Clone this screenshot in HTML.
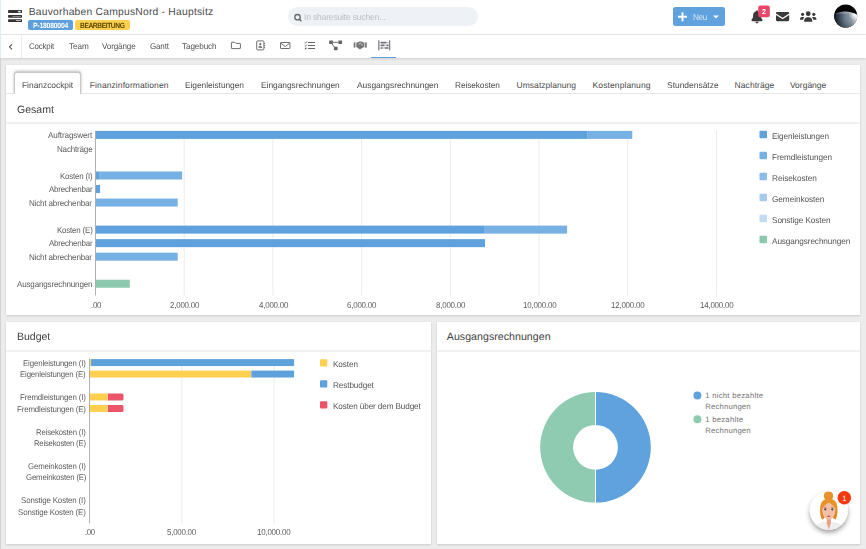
<!DOCTYPE html>
<html lang="de"><head><meta charset="utf-8"><title>Bauvorhaben CampusNord - Hauptsitz</title>
<style>
html,body{margin:0;padding:0}
body{width:866px;height:549px;overflow:hidden;position:relative;background:#ececec;font-family:"Liberation Sans", sans-serif;}
.abs,.t{position:absolute}
.t{white-space:nowrap;line-height:normal;transform-origin:0 0;text-rendering:geometricPrecision}

#hdr{left:0;top:0;width:866px;height:34px;background:#fff;border-bottom:1px solid #e7e7e7}
#nav{left:0;top:35px;width:866px;height:23px;background:#fff;box-shadow:0 1px 2.5px rgba(0,0,0,.12)}
#lstrip{left:0;top:0;width:1px;height:58px;background:#e3ebf5}
#lstrip2{left:0;top:58px;width:1px;height:491px;background:#d2d2d2}
#navdiv{left:21px;top:35px;width:1px;height:23px;background:#ececec}
.badge{border-radius:2px;height:9.5px}
#search{left:288px;top:7px;width:190px;height:19px;border-radius:10px;background:#eef1f5}
#neu{left:672.6px;top:7.1px;width:52.8px;height:18.5px;border-radius:2.5px;background:#5fa2de}
.card{background:#fff;box-shadow:0 1px 2px rgba(0,0,0,.13),0 0 1px rgba(0,0,0,.08)}
#c1{left:6px;top:64.5px;width:853.8px;height:250.8px}
#c2{left:6px;top:322px;width:424.8px;height:221.5px}
#c3{left:436.6px;top:322px;width:423.2px;height:221.5px}
.hl{height:1.5px;background:#f0f0f0}
#tab{left:13.9px;top:71.9px;width:67px;height:22.1px;background:#fff;border:1px solid #c8c8c8;border-bottom:none;border-radius:3px 3px 0 0;box-sizing:border-box;box-shadow:0 -1px 3px rgba(0,0,0,.28);clip-path:inset(-6px -6px 0 -6px)}
#navul{left:371.3px;top:56.5px;width:24.7px;height:1.6px;background:#5c9fdc}
svg.main{position:absolute;left:0;top:0}
</style></head><body>
<div class="abs" id="hdr"></div>
<div class="abs" id="nav"></div>
<div class="abs" id="lstrip"></div><div class="abs" id="lstrip2"></div>
<div class="abs" id="navdiv"></div>
<div class="abs badge" style="left:28.4px;top:20.3px;width:44.5px;background:#5c9fdc"></div>
<div class="abs badge" style="left:75.1px;top:20.3px;width:54.6px;background:#fdd050"></div>
<div class="abs" id="search"></div>
<div class="abs" id="neu"></div>
<div class="abs" id="navul"></div>
<div class="abs card" id="c1"></div>
<div class="abs" style="left:6px;top:93px;width:853.5px;height:1px;background:#e6e6e6"></div>
<div class="abs" id="tab"></div>
<div class="abs hl" style="left:6px;top:122.3px;width:853.5px"></div>
<div class="abs card" id="c2"></div>
<div class="abs hl" style="left:6px;top:350px;width:425px"></div>
<div class="abs card" id="c3"></div>
<div class="abs hl" style="left:436.5px;top:350px;width:423px"></div>
<svg class="main" width="866" height="549" viewBox="0 0 866 549">
<g id="icons">
<!-- server -->
<g fill="#333">
<rect x="8.100" y="10.100" width="13.900" height="2.900" rx=".6"/><rect x="8.100" y="14.900" width="13.900" height="2.800" rx=".6"/><rect x="8.100" y="19.200" width="13.900" height="2.800" rx=".6"/>
</g>
<rect x="17.900" y="10.900" width="2.900" height="1.500" fill="#d8dde6"/>
<rect x="12.400" y="16" width="8.400" height=".8" fill="#9a9a9a"/>
<rect x="15.900" y="20.200" width="4.900" height=".8" fill="#d9cfc0"/>
<!-- search -->
<circle cx="297.500" cy="17.200" r="2.700" fill="none" stroke="#666" stroke-width="1.300"/>
<path d="M299.600 19.300L301 20.700" stroke="#666" stroke-width="1.500" stroke-linecap="round"/>
<!-- plus + caret -->
<path d="M678 16.7h9M682.5 12.2v9" stroke="#fff" stroke-width="1.9"/>
<path d="M713 15.4h5.9l-2.95 3z" fill="#fff"/>
<!-- bell -->
<path d="M757 10.2c.5 0 .8.35.8.8v.35c1.9.4 3.1 2 3.1 4 0 2.3.6 3.4 1.4 4.200c.3.300.300.600.300.800 0 .5-.4.800-.9.800h-9.400c-.5 0-.9-.300-.9-.800 0-.200 0-.500.300-.800.800-.800 1.400-1.900 1.400-4.200 0-2 1.200-3.600 3.100-4v-.350c0-.450.300-.8.800-.8zM755.400 21.800h3.200c0 .900-.700 1.500-1.600 1.500s-1.600-.600-1.600-1.500z" fill="#3a3a3a"/>
<rect x="758.2" y="5.5" width="11.6" height="11.7" rx="2" fill="#e8476a"/>
<!-- envelope solid -->
<path d="M777.200 12h10.800c.700 0 1.200.550 1.200 1.200v.300l-6.600 4.300-6.600-4.300v-.300c0-.650.550-1.200 1.200-1.200zM776 15l6.600 4.200 6.600-4.200v5c0 .650-.550 1.200-1.200 1.200h-10.800c-.650 0-1.200-.550-1.200-1.200z" fill="#3a3a3a"/>
<!-- users -->
<g fill="#3a3a3a">
<circle cx="808.2" cy="13.700" r="2.400"/>
<path d="M804.200 21.800v-1.400c0-1.900 1.500-3.200 3.200-3.200h1.600c1.700 0 3.200 1.300 3.200 3.200v1.400z"/>
<circle cx="802.600" cy="14.300" r="1.600"/><circle cx="813.800" cy="14.300" r="1.600"/>
<path d="M800 19.800v-.900c0-1.200.900-2 2-2h1.300c.400 0 .700.100 1 .300-.700.700-1.100 1.600-1.200 2.600zM816.400 19.800v-.900c0-1.200-.900-2-2-2h-1.300c-.400 0-.700.100-1 .300.700.700 1.100 1.600 1.200 2.600z"/>
</g>
<!-- chevron left -->
<path d="M12 44.300L9.500 46.800L12 49.300" fill="none" stroke="#555" stroke-width="1.100"/>
<!-- nav icons -->
<g fill="none" stroke="#666" stroke-width=".95">
<path d="M231.900 42.300h2.900l1.100 1.100h4q.5 0 .5.5v4.200q0 .5-.5.5h-8q-.5 0-.5-.5v-5.300q0-.5.5-.5z"/>
<rect x="256.700" y="40.900" width="7.200" height="9" rx="1"/>
<path d="M264.600 43v1M264.600 45v1M264.600 47v1" stroke-width=".9"/>
<rect x="280.500" y="42.500" width="9.400" height="6" rx=".5"/>
<path d="M280.700 43.100l4.500 3.400 4.500-3.400"/>
<path d="M308 42.500h7.100M308 45.500h7.100M308 48.500h7.100" stroke-width="1.150"/>
<path d="M304.700 42.400l.8.800 1.400-1.600M304.700 45.400l.8.800 1.400-1.600" stroke-width=".95"/>
</g>
<circle cx="260.300" cy="44.200" r="1.100" fill="#666"/>
<path d="M258.400 47.800c0-1.100.800-1.800 1.900-1.800s1.900.700 1.900 1.800z" fill="#5a5a5a"/>
<circle cx="305.700" cy="48.500" r=".9" fill="#666"/>
<!-- project diagram -->
<g fill="#666">
<rect x="329.200" y="40.600" width="3.700" height="3.500" rx=".3"/><rect x="338.400" y="40.600" width="3.700" height="3.500" rx=".3"/><rect x="333.900" y="46.800" width="3.700" height="3.500" rx=".3"/>
</g>
<path d="M332.900 42.300h5.500M331.800 43.500l2.900 4" stroke="#666" stroke-width=".9" fill="none"/>
<!-- handshake -->
<g fill="#747474">
<rect x="353.700" y="42.400" width="1.700" height="5.200"/><rect x="365.100" y="42.400" width="1.700" height="5.200"/>
<path d="M356.300 42.600h1.300l1.700-1h2.300l1.800 1h1v4.600h-.9l-2.800 1.800c-.5.300-1 .3-1.500 0l-2.300-1.800h-.6z"/>
</g>
<path d="M358.800 44.300l1.500-1.300 2.700 2.600" stroke="#fff" stroke-width=".7" fill="none"/>
<!-- abacus -->
<g fill="none">
<path d="M378.800 40.300v10.100M389.700 40.300v10.100" stroke="#5a5868" stroke-width=".95"/>
<path d="M379 42.600h10.600M379 45.300h10.600M379 48h10.600" stroke="#77758a" stroke-width=".5"/>
<path d="M380.800 42.600h5.600M380.800 45.300h3.600M386.600 45.300h1.800M380.800 48h1.800M384.800 48h3.600" stroke="#75737f" stroke-width="1.700"/>
</g>

<!-- user avatar -->
<defs>
<clipPath id="avc"><circle cx="845.7" cy="16" r="11.5"/></clipPath>
<linearGradient id="moon" gradientUnits="userSpaceOnUse" x1="834" y1="0" x2="857.500" y2="0"><stop offset="0" stop-color="#0b1118"/><stop offset=".18" stop-color="#2c3946"/><stop offset=".45" stop-color="#67788a"/><stop offset=".75" stop-color="#93a1ad"/><stop offset=".92" stop-color="#c9d0d6"/><stop offset="1" stop-color="#ffffff"/></linearGradient>
<linearGradient id="moonv" gradientUnits="userSpaceOnUse" x1="0" y1="11" x2="0" y2="28"><stop offset="0" stop-color="#fff" stop-opacity=".45"/><stop offset=".22" stop-color="#fff" stop-opacity="0"/><stop offset=".6" stop-color="#000" stop-opacity=".05"/><stop offset="1" stop-color="#000" stop-opacity=".3"/></linearGradient>
<radialGradient id="moonh" gradientUnits="userSpaceOnUse" cx="855" cy="14.500" r="6"><stop offset="0" stop-color="#fff" stop-opacity=".95"/><stop offset="1" stop-color="#fff" stop-opacity="0"/></radialGradient>
<filter id="sh" x="-40%" y="-40%" width="180%" height="190%"><feGaussianBlur in="SourceAlpha" stdDeviation="2.6"/><feOffset dy="2.5"/><feComponentTransfer><feFuncA type="linear" slope=".38"/></feComponentTransfer><feMerge><feMergeNode/><feMergeNode in="SourceGraphic"/></feMerge></filter>
<clipPath id="botc"><circle cx="828.8" cy="510.6" r="19"/></clipPath>
</defs>
<g clip-path="url(#avc)">
<rect x="834" y="4" width="24" height="24" fill="#050505"/>
<circle cx="845" cy="35" r="23.500" fill="url(#moon)"/>
<circle cx="845" cy="35" r="23.500" fill="url(#moonv)"/>
<circle cx="845" cy="35" r="23.500" fill="url(#moonh)"/>
</g>
<!-- chatbot -->
<circle cx="828.8" cy="510.6" r="19" fill="#fff" filter="url(#sh)"/>
<g clip-path="url(#botc)">
<path d="M814 531c0-5.500 4.500-8.500 10.300-9.300l4.500 2.300 4.500-2.300c5.800.8 10.300 3.800 10.300 9.300z" fill="#efefef"/>
<path d="M820.600 506c-1 5-.5 10 1.600 13.800l2.600-2zM837 506c1 5 .5 10-1.600 13.800l-2.600-2z" fill="#e08a22"/>
<rect x="826.700" y="516" width="4.200" height="8" fill="#e7a38a"/>
<path d="M826.700 522.500l2.100 7.500 2.100-7.500z" fill="#e7a38a"/>
<circle cx="828.500" cy="495.900" r="4.700" fill="#e8922a"/>
<ellipse cx="828.800" cy="506.200" rx="8.500" ry="7.800" fill="#e8922a"/>
<ellipse cx="828.800" cy="510.700" rx="6.400" ry="8.900" fill="#f3bfa8"/>
<path d="M821.800 510c-.8-5.500 2-9.500 7-9.500s7.800 4 7 9.500c-1.200-3.200-3.600-6-7-7.600-3.400 1.600-5.800 4.400-7 7.600z" fill="#e8922a"/>
<circle cx="825.300" cy="509.300" r="1.150" fill="#3f4550"/><circle cx="832.300" cy="509.300" r="1.150" fill="#3f4550"/>
<path d="M823.800 507.300h2.900M830.900 507.300h2.900" stroke="#b5651d" stroke-width=".5"/>
<ellipse cx="828.800" cy="516.200" rx="1.600" ry=".8" fill="#d2404a"/>
</g>
<circle cx="844.300" cy="497.700" r="6.800" fill="#f43a10"/>
</g>

<g id="chart1">
<rect x="183.70" y="130.6" width="1" height="164.79999999999998" fill="#ebebeb"/>
<rect x="272.40" y="130.6" width="1" height="164.79999999999998" fill="#ebebeb"/>
<rect x="361.10" y="130.6" width="1" height="164.79999999999998" fill="#ebebeb"/>
<rect x="449.80" y="130.6" width="1" height="164.79999999999998" fill="#ebebeb"/>
<rect x="538.50" y="130.6" width="1" height="164.79999999999998" fill="#ebebeb"/>
<rect x="627.20" y="130.6" width="1" height="164.79999999999998" fill="#ebebeb"/>
<rect x="715.90" y="130.6" width="1" height="164.79999999999998" fill="#ebebeb"/>
<rect x="95.65" y="130.90" width="492.29" height="8.0" fill="#5ea1dd"/>
<rect x="587.64" y="130.90" width="1.1" height="8.0" fill="#fff" opacity=".6"/>
<rect x="587.94" y="130.90" width="44.35" height="8.0" fill="#77b0e3"/>
<rect x="95.65" y="171.49" width="4.44" height="8.0" fill="#5ea1dd"/>
<rect x="99.79" y="171.49" width="1.1" height="8.0" fill="#fff" opacity=".6"/>
<rect x="100.09" y="171.49" width="82.05" height="8.0" fill="#77b0e3"/>
<rect x="95.65" y="185.02" width="4.44" height="8.0" fill="#5ea1dd"/>
<rect x="95.65" y="198.55" width="82.05" height="8.0" fill="#77b0e3"/>
<rect x="95.65" y="225.61" width="389.39" height="8.0" fill="#5ea1dd"/>
<rect x="484.74" y="225.61" width="1.1" height="8.0" fill="#fff" opacity=".6"/>
<rect x="485.04" y="225.61" width="82.05" height="8.0" fill="#77b0e3"/>
<rect x="95.65" y="239.14" width="389.39" height="8.0" fill="#5ea1dd"/>
<rect x="95.65" y="252.67" width="82.05" height="8.0" fill="#77b0e3"/>
<rect x="95.65" y="279.73" width="34.15" height="8.0" fill="#8cc9ae"/>
<rect x="95.05" y="130.6" width="0.9" height="164.80" fill="#a8a8a8"/>
<rect x="759.5" y="130.70" width="7.5" height="7.5" rx="1" fill="#5ea1dd"/>
<rect x="759.5" y="151.70" width="7.5" height="7.5" rx="1" fill="#77b0e3"/>
<rect x="759.5" y="172.70" width="7.5" height="7.5" rx="1" fill="#8bbce7"/>
<rect x="759.5" y="193.70" width="7.5" height="7.5" rx="1" fill="#a5caec"/>
<rect x="759.5" y="214.70" width="7.5" height="7.5" rx="1" fill="#c4dcf3"/>
<rect x="759.5" y="235.70" width="7.5" height="7.5" rx="1" fill="#8cc9ae"/>
</g>
<g id="chart2">
<rect x="181.30" y="358.7" width="1" height="164.59999999999997" fill="#ebebeb"/>
<rect x="273.50" y="358.7" width="1" height="164.59999999999997" fill="#ebebeb"/>
<rect x="89.40" y="359.10" width="1.66" height="6.95" fill="#ffd04f"/>
<rect x="90.76" y="359.10" width="0.6" height="6.95" fill="#fff" opacity=".7"/>
<rect x="91.06" y="359.10" width="203.02" height="6.95" fill="#5ea1dd"/>
<rect x="89.40" y="370.57" width="161.90" height="6.95" fill="#ffd04f"/>
<rect x="251.00" y="370.57" width="0.6" height="6.95" fill="#fff" opacity=".7"/>
<rect x="251.30" y="370.57" width="42.78" height="6.95" fill="#5ea1dd"/>
<rect x="89.40" y="393.51" width="18.44" height="6.95" fill="#ffd04f"/>
<rect x="107.54" y="393.51" width="0.6" height="6.95" fill="#fff" opacity=".7"/>
<path d="M107.84 393.51h14.17a1.5 1.5 0 0 1 1.5 1.5v3.95a1.5 1.5 0 0 1 -1.5 1.5h-14.17z" fill="#ec5569"/>
<rect x="89.40" y="404.98" width="18.44" height="6.95" fill="#ffd04f"/>
<rect x="107.54" y="404.98" width="0.6" height="6.95" fill="#fff" opacity=".7"/>
<path d="M107.84 404.98h14.17a1.5 1.5 0 0 1 1.5 1.5v3.95a1.5 1.5 0 0 1 -1.5 1.5h-14.17z" fill="#ec5569"/>
<rect x="89.15" y="358.7" width="0.9" height="164.60" fill="#a8a8a8"/>
<rect x="320" y="359.20" width="7.3" height="7.3" rx="1" fill="#ffd04f"/>
<rect x="320" y="380.20" width="7.3" height="7.3" rx="1" fill="#5ea1dd"/>
<rect x="320" y="401.20" width="7.3" height="7.3" rx="1" fill="#ec5569"/>
</g>
<g id="chart3">
<path d="M595.5 392.0A55.3 55.3 0 0 1 595.5 502.6L595.5 469.7A22.4 22.4 0 0 0 595.5 424.90000000000003Z" fill="#5fa2dd"/>
<path d="M595.5 392.0A55.3 55.3 0 0 0 595.5 502.6L595.5 469.7A22.4 22.4 0 0 1 595.5 424.90000000000003Z" fill="#8ecbb0"/>
<rect x="595.0" y="392.0" width="1" height="32.9" fill="#fff"/>
<rect x="595.0" y="469.7" width="1" height="32.9" fill="#fff"/>
<circle cx="697.4" cy="395.6" r="4" fill="#5fa2dd"/>
<circle cx="697.4" cy="419.3" r="4" fill="#8ecbb0"/>
</g>
</svg>

<span class="t" id="t0" style="left:28.70px;top:7.00px;font-size:10.30px;color:#4b4b4f;letter-spacing:0.230px;">Bauvorhaben CampusNord - Hauptsitz</span>
<span class="t" id="t1" style="left:33.20px;top:21.00px;font-size:7.60px;color:#ffffff;font-weight:700;letter-spacing:-0.280px;transform:scaleX(0.9101);">P-18080004</span>
<span class="t" id="t2" style="left:79.80px;top:21.00px;font-size:7.60px;color:#5a4700;font-weight:700;letter-spacing:-0.462px;transform:scaleX(0.8783);">BEARBEITUNG</span>
<span class="t" id="t3" style="left:304.10px;top:12.00px;font-size:8.90px;color:#bbbfc4;letter-spacing:-0.137px;transform:scaleX(0.9499);">In sharesuite suchen...</span>
<span class="t" id="t4" style="left:692.70px;top:12.00px;font-size:8.80px;color:#d6e6f6;letter-spacing:-0.385px;transform:scaleX(0.9294);">Neu</span>
<span class="t" id="t5" style="left:762.00px;top:7.00px;font-size:7.20px;color:#ffffff;font-weight:700;transform:scaleX(0.9988);">2</span>
<span class="t" id="t6" style="left:29.40px;top:41.00px;font-size:8.40px;color:#555;letter-spacing:-0.180px;transform:scaleX(0.9428);">Cockpit</span>
<span class="t" id="t7" style="left:68.80px;top:41.00px;font-size:8.40px;color:#555;letter-spacing:-0.100px;transform:scaleX(0.9782);">Team</span>
<span class="t" id="t8" style="left:101.80px;top:41.00px;font-size:8.40px;color:#555;letter-spacing:-0.127px;transform:scaleX(0.9633);">Vorgänge</span>
<span class="t" id="t9" style="left:149.60px;top:41.00px;font-size:8.40px;color:#555;letter-spacing:-0.159px;transform:scaleX(0.9539);">Gantt</span>
<span class="t" id="t10" style="left:182.20px;top:41.00px;font-size:8.40px;color:#555;letter-spacing:-0.101px;transform:scaleX(0.9712);">Tagebuch</span>
<span class="t" id="t11" style="left:21.70px;top:80.00px;font-size:8.50px;color:#4a4a4a;letter-spacing:-0.026px;transform:scaleX(0.9911);">Finanzcockpit</span>
<span class="t" id="t12" style="left:89.80px;top:80.00px;font-size:8.50px;color:#4a4a4a;letter-spacing:0.093px;">Finanzinformationen</span>
<span class="t" id="t13" style="left:185.20px;top:80.00px;font-size:8.50px;color:#4a4a4a;letter-spacing:-0.043px;transform:scaleX(0.9851);">Eigenleistungen</span>
<span class="t" id="t14" style="left:261.40px;top:80.00px;font-size:8.50px;color:#4a4a4a;letter-spacing:-0.039px;transform:scaleX(0.9876);">Eingangsrechnungen</span>
<span class="t" id="t15" style="left:356.50px;top:80.00px;font-size:8.50px;color:#4a4a4a;letter-spacing:-0.031px;transform:scaleX(0.9904);">Ausgangsrechnungen</span>
<span class="t" id="t16" style="left:455.00px;top:80.00px;font-size:8.50px;color:#4a4a4a;letter-spacing:-0.080px;transform:scaleX(0.9744);">Reisekosten</span>
<span class="t" id="t17" style="left:516.50px;top:80.00px;font-size:8.50px;color:#4a4a4a;letter-spacing:0.045px;">Umsatzplanung</span>
<span class="t" id="t18" style="left:592.60px;top:80.00px;font-size:8.50px;color:#4a4a4a;letter-spacing:0.098px;">Kostenplanung</span>
<span class="t" id="t19" style="left:666.50px;top:80.00px;font-size:8.50px;color:#4a4a4a;letter-spacing:-0.014px;transform:scaleX(0.9954);">Stundensätze</span>
<span class="t" id="t20" style="left:734.60px;top:80.00px;font-size:8.50px;color:#4a4a4a;letter-spacing:0.060px;">Nachträge</span>
<span class="t" id="t21" style="left:789.90px;top:80.00px;font-size:8.50px;color:#4a4a4a;">Vorgänge</span>
<span class="t" id="t22" style="left:16.50px;top:104.00px;font-size:10.60px;color:#3f3f3f;letter-spacing:-0.009px;transform:scaleX(0.9981);">Gesamt</span>
<span class="t" id="t23" style="left:16.50px;top:331.00px;font-size:10.60px;color:#3f3f3f;letter-spacing:-0.024px;transform:scaleX(0.9945);">Budget</span>
<span class="t" id="t24" style="left:446.80px;top:331.00px;font-size:10.60px;color:#3f3f3f;letter-spacing:0.038px;">Ausgangsrechnungen</span>
<span class="t" id="t25" style="left:842.20px;top:494.00px;font-size:7.50px;color:#ffffff;">1</span>
<span class="t" id="t26" style="left:48.20px;top:130.00px;font-size:8.50px;color:#5c5c5c;letter-spacing:-0.131px;transform:scaleX(0.9551);">Auftragswert</span>
<span class="t" id="t27" style="left:56.80px;top:144.00px;font-size:8.50px;color:#5c5c5c;letter-spacing:-0.186px;transform:scaleX(0.9436);">Nachträge</span>
<span class="t" id="t28" style="left:59.80px;top:171.00px;font-size:8.50px;color:#5c5c5c;letter-spacing:-0.196px;transform:scaleX(0.9290);">Kosten (I)</span>
<span class="t" id="t29" style="left:48.80px;top:184.00px;font-size:8.50px;color:#5c5c5c;letter-spacing:-0.210px;transform:scaleX(0.9361);">Abrechenbar</span>
<span class="t" id="t30" style="left:29.40px;top:198.00px;font-size:8.50px;color:#5c5c5c;letter-spacing:-0.166px;transform:scaleX(0.9431);">Nicht abrechenbar</span>
<span class="t" id="t31" style="left:56.60px;top:225.00px;font-size:8.50px;color:#5c5c5c;letter-spacing:-0.201px;transform:scaleX(0.9333);">Kosten (E)</span>
<span class="t" id="t32" style="left:48.80px;top:238.00px;font-size:8.50px;color:#5c5c5c;letter-spacing:-0.210px;transform:scaleX(0.9361);">Abrechenbar</span>
<span class="t" id="t33" style="left:29.40px;top:252.00px;font-size:8.50px;color:#5c5c5c;letter-spacing:-0.166px;transform:scaleX(0.9431);">Nicht abrechenbar</span>
<span class="t" id="t34" style="left:16.90px;top:279.00px;font-size:8.50px;color:#5c5c5c;letter-spacing:-0.174px;transform:scaleX(0.9467);">Ausgangsrechnungen</span>
<span class="t" id="t35" style="left:90.55px;top:300.00px;font-size:8.60px;color:#5c5c5c;letter-spacing:-0.303px;transform:scaleX(0.9249);">.00</span>
<span class="t" id="t36" style="left:169.80px;top:300.00px;font-size:8.60px;color:#5c5c5c;letter-spacing:-0.243px;transform:scaleX(0.9249);">2,000.00</span>
<span class="t" id="t37" style="left:258.50px;top:300.00px;font-size:8.60px;color:#5c5c5c;letter-spacing:-0.243px;transform:scaleX(0.9249);">4,000.00</span>
<span class="t" id="t38" style="left:347.20px;top:300.00px;font-size:8.60px;color:#5c5c5c;letter-spacing:-0.243px;transform:scaleX(0.9249);">6,000.00</span>
<span class="t" id="t39" style="left:435.90px;top:300.00px;font-size:8.60px;color:#5c5c5c;letter-spacing:-0.243px;transform:scaleX(0.9249);">8,000.00</span>
<span class="t" id="t40" style="left:522.50px;top:300.00px;font-size:8.60px;color:#5c5c5c;letter-spacing:-0.243px;transform:scaleX(0.9249);">10,000.00</span>
<span class="t" id="t41" style="left:611.20px;top:300.00px;font-size:8.60px;color:#5c5c5c;letter-spacing:-0.243px;transform:scaleX(0.9249);">12,000.00</span>
<span class="t" id="t42" style="left:699.90px;top:300.00px;font-size:8.60px;color:#5c5c5c;letter-spacing:-0.243px;transform:scaleX(0.9249);">14,000.00</span>
<span class="t" id="t43" style="left:772.00px;top:131.00px;font-size:8.40px;color:#555555;letter-spacing:-0.075px;transform:scaleX(0.9738);">Eigenleistungen</span>
<span class="t" id="t44" style="left:772.00px;top:152.00px;font-size:8.40px;color:#555555;letter-spacing:-0.068px;transform:scaleX(0.9771);">Fremdleistungen</span>
<span class="t" id="t45" style="left:772.00px;top:173.00px;font-size:8.40px;color:#555555;letter-spacing:-0.049px;transform:scaleX(0.9840);">Reisekosten</span>
<span class="t" id="t46" style="left:772.00px;top:194.00px;font-size:8.40px;color:#555555;letter-spacing:-0.061px;transform:scaleX(0.9814);">Gemeinkosten</span>
<span class="t" id="t47" style="left:772.00px;top:215.00px;font-size:8.40px;color:#555555;letter-spacing:-0.072px;transform:scaleX(0.9755);">Sonstige Kosten</span>
<span class="t" id="t48" style="left:772.00px;top:236.00px;font-size:8.40px;color:#555555;letter-spacing:-0.077px;transform:scaleX(0.9760);">Ausgangsrechnungen</span>
<span class="t" id="t49" style="left:23.00px;top:358.00px;font-size:8.30px;color:#5c5c5c;letter-spacing:-0.142px;transform:scaleX(0.9451);">Eigenleistungen (I)</span>
<span class="t" id="t50" style="left:20.40px;top:369.00px;font-size:8.30px;color:#5c5c5c;letter-spacing:-0.157px;transform:scaleX(0.9422);">Eigenleistungen (E)</span>
<span class="t" id="t51" style="left:20.00px;top:392.00px;font-size:8.30px;color:#5c5c5c;letter-spacing:-0.136px;transform:scaleX(0.9494);">Fremdleistungen (I)</span>
<span class="t" id="t52" style="left:17.00px;top:404.00px;font-size:8.30px;color:#5c5c5c;letter-spacing:-0.141px;transform:scaleX(0.9497);">Fremdleistungen (E)</span>
<span class="t" id="t53" style="left:36.20px;top:427.00px;font-size:8.30px;color:#5c5c5c;letter-spacing:-0.178px;transform:scaleX(0.9338);">Reisekosten (I)</span>
<span class="t" id="t54" style="left:34.00px;top:438.00px;font-size:8.30px;color:#5c5c5c;letter-spacing:-0.209px;transform:scaleX(0.9266);">Reisekosten (E)</span>
<span class="t" id="t55" style="left:28.20px;top:461.00px;font-size:8.30px;color:#5c5c5c;letter-spacing:-0.161px;transform:scaleX(0.9437);">Gemeinkosten (I)</span>
<span class="t" id="t56" style="left:25.50px;top:472.00px;font-size:8.30px;color:#5c5c5c;letter-spacing:-0.176px;transform:scaleX(0.9415);">Gemeinkosten (E)</span>
<span class="t" id="t57" style="left:21.20px;top:495.00px;font-size:8.30px;color:#5c5c5c;letter-spacing:-0.132px;transform:scaleX(0.9500);">Sonstige Kosten (I)</span>
<span class="t" id="t58" style="left:18.20px;top:507.00px;font-size:8.30px;color:#5c5c5c;letter-spacing:-0.137px;transform:scaleX(0.9503);">Sonstige Kosten (E)</span>
<span class="t" id="t59" style="left:84.80px;top:527.00px;font-size:8.60px;color:#5c5c5c;letter-spacing:-0.413px;transform:scaleX(0.8982);">.00</span>
<span class="t" id="t60" style="left:167.40px;top:527.00px;font-size:8.60px;color:#5c5c5c;letter-spacing:-0.255px;transform:scaleX(0.9211);">5,000.00</span>
<span class="t" id="t61" style="left:257.35px;top:527.00px;font-size:8.60px;color:#5c5c5c;letter-spacing:-0.237px;transform:scaleX(0.9265);">10,000.00</span>
<span class="t" id="t62" style="left:333.00px;top:359.00px;font-size:8.40px;color:#555555;letter-spacing:-0.094px;transform:scaleX(0.9732);">Kosten</span>
<span class="t" id="t63" style="left:333.00px;top:380.00px;font-size:8.40px;color:#555555;letter-spacing:-0.089px;transform:scaleX(0.9722);">Restbudget</span>
<span class="t" id="t64" style="left:333.00px;top:401.00px;font-size:8.40px;color:#555555;letter-spacing:-0.096px;transform:scaleX(0.9678);">Kosten über dem Budget</span>
<span class="t" id="t65" style="left:705.20px;top:391.00px;font-size:7.70px;color:#747474;letter-spacing:0.270px;">1 nicht bezahlte</span>
<span class="t" id="t66" style="left:705.20px;top:402.00px;font-size:7.70px;color:#747474;letter-spacing:0.203px;">Rechnungen</span>
<span class="t" id="t67" style="left:705.20px;top:415.00px;font-size:7.70px;color:#747474;letter-spacing:0.273px;">1 bezahlte</span>
<span class="t" id="t68" style="left:705.20px;top:426.00px;font-size:7.70px;color:#747474;letter-spacing:0.203px;">Rechnungen</span>
</body></html>
